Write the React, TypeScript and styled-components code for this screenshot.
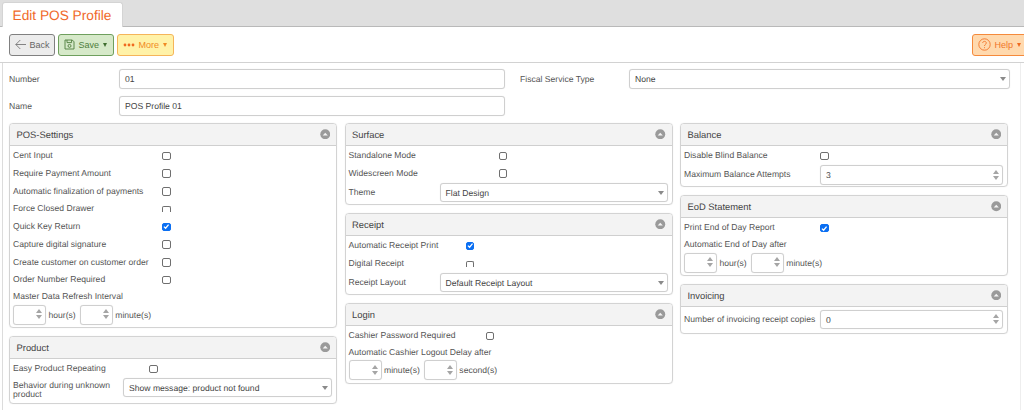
import React from 'react';
import styled, { createGlobalStyle } from 'styled-components';

const GlobalStyle = createGlobalStyle`
  html, body {
    margin: 0;
    padding: 0;
    background: #fff;
    overflow: hidden;
  }
  * {
    box-sizing: border-box;
  }
`;

const Page = styled.div`
  width: 1024px;
  height: 410px;
  overflow: hidden;
  font-family: 'Liberation Sans', Arial, sans-serif;
  font-size: 8.6px;
  text-rendering: geometricPrecision;
  color: #555;
`;

const TabBar = styled.div`
  height: 27px;
  background: #dfdfdf;
  border-bottom: 1px solid #b9b9b9;
  padding: 2px 0 0 2px;
`;

const Tab = styled.div`
  width: 121px;
  height: 25px;
  background: #fff;
  border: 1px solid #d4d4d4;
  border-bottom: none;
  border-radius: 3px 3px 0 0;
  padding: 4px 0 0 9.5px;
  font-size: 13.7px;
  line-height: 18px;
  white-space: nowrap;
  color: #f0692a;
`;

const Toolbar = styled.div`
  height: 36px;
  display: flex;
  align-items: flex-start;
  gap: 3px;
  padding: 7px 0 0 9px;
  border-bottom: 1px solid #d2d2d2;
  overflow: hidden;
`;

const ToolButton = styled.button<{ $w: number; $bg: string; $line: string; $fg: string; $bleed?: boolean }>`
  flex: none;
  width: ${p => p.$w}px;
  height: 21.5px;
  margin-right: ${p => (p.$bleed ? -4 : 0)}px;
  display: flex;
  align-items: center;
  gap: 4px;
  padding: 0 0 0 4.5px;
  background: ${p => p.$bg};
  border: 1px solid ${p => p.$line};
  border-radius: 3px;
  color: ${p => p.$fg};
  font-family: inherit;
  font-size: 9px;
  white-space: nowrap;
`;

const Spacer = styled.div`
  flex: 1;
`;

const Caret = styled.span<{ $fg: string }>`
  width: 0;
  height: 0;
  border-left: 2.5px solid transparent;
  border-right: 2.5px solid transparent;
  border-top: 4px solid ${p => p.$fg};
`;

const Content = styled.div`
  height: 348px;
  margin: 0 3px 0 2px;
  padding: 6px 0 0 6px;
  border-left: 1px solid #dcdcdc;
  border-right: 1px solid #eeeeee;
`;

const TopForm = styled.div`
  display: grid;
  grid-template-columns: 110px 386px 124px 381px;
  grid-auto-rows: 20px;
  row-gap: 7px;
  align-items: center;
`;

const TopLabel = styled.div<{ $indent?: number }>`
  padding-left: ${p => p.$indent ?? 0}px;
  margin-top: -1px;
`;

const Field = styled.div`
  position: relative;
  display: flex;
  align-items: center;
  height: 19.5px;
  padding-left: 5px;
  background: #fff;
  border: 1px solid #cfcfcf;
  border-radius: 3px;
  box-shadow: 0 0 1px rgba(0, 0, 0, 0.12);
  color: #444;
`;

const SelectArrow = styled.span`
  position: absolute;
  right: 3px;
  top: 7px;
  width: 0;
  height: 0;
  border-left: 3.5px solid transparent;
  border-right: 3.5px solid transparent;
  border-top: 4px solid #8a8a8a;
`;

const Spin = styled.span`
  position: absolute;
  right: 3px;
  top: 3.5px;
  display: flex;
  flex-direction: column;
  gap: 2px;
`;

const SpinUp = styled.span`
  width: 0;
  height: 0;
  border-left: 3px solid transparent;
  border-right: 3px solid transparent;
  border-bottom: 4px solid #a5a5a5;
`;

const SpinDown = styled.span`
  width: 0;
  height: 0;
  border-left: 3px solid transparent;
  border-right: 3px solid transparent;
  border-top: 4px solid #a5a5a5;
`;

const Columns = styled.div`
  display: grid;
  grid-template-columns: repeat(3, 328px);
  column-gap: 7.5px;
  margin-top: 6.5px;
  align-items: start;
`;

const Stack = styled.div`
  display: flex;
  flex-direction: column;
  gap: 7.5px;
`;

const PanelBox = styled.section`
  border: 1px solid #d3d3d3;
  border-radius: 4px;
  box-shadow: 0 0 1px rgba(0, 0, 0, 0.15);
  overflow: hidden;
`;

const PanelHead = styled.header`
  height: 22px;
  display: flex;
  align-items: center;
  justify-content: space-between;
  padding: 0 6px 0 6.5px;
  background: #f3f3f3;
  border-bottom: 1px solid #cfcfcf;
  font-size: 9.4px;
  color: #444;
`;

const PanelBody = styled.div`
  padding: 1.5px 4px 1.5px 3px;
`;

const Row = styled.div<{ $label: number; $h?: number; $top?: boolean }>`
  display: grid;
  grid-template-columns: ${p => p.$label}px 1fr;
  align-items: ${p => (p.$top ? 'start' : 'center')};
  height: ${p => p.$h ?? 17.75}px;
`;

const StackedLabel = styled.div`
  height: 14.5px;
  line-height: 14.5px;
  white-space: nowrap;
`;

const SpinnerRow = styled.div`
  display: flex;
  align-items: center;
  gap: 2.5px;
  height: 22px;
`;

const SpinnerField = styled(Field)`
  width: 33px;
  height: 20px;
`;

const SpinnerUnit = styled.span`
  margin-right: 1.5px;
`;

const Box = styled.span<{ $on?: boolean; $clip?: boolean }>`
  display: flex;
  align-items: center;
  justify-content: center;
  width: 8.5px;
  height: ${p => (p.$clip ? 6 : 8.5)}px;
  background: ${p => (p.$on ? '#0b6ff2' : '#fff')};
  border: 1px solid ${p => (p.$on ? '#0b6ff2' : '#6f6f6f')};
  border-bottom: ${p => (p.$clip ? 'none' : undefined)};
  border-radius: ${p => (p.$clip ? '2px 2px 0 0' : '2px')};
`;

const RowLabel = styled.span<{ $nowrap?: boolean; $top?: boolean }>`
  line-height: 9.7px;
  padding-top: ${p => (p.$top ? 3 : 0)}px;
  white-space: ${p => (p.$nowrap ? 'nowrap' : 'normal')};
`;

const CollapseIcon = () => (
  <svg width="10.5" height="10.5" viewBox="0 0 11 11">
    <circle cx="5.5" cy="5.5" r="5.2" fill="#9a9a9a" />
    <path d="M2.8 6.8 L5.5 3.8 L8.2 6.8 Z" fill="#f3f3f3" />
  </svg>
);

const Panel = ({ title, children }: { title: string; children: React.ReactNode }) => (
  <PanelBox>
    <PanelHead>
      {title}
      <CollapseIcon />
    </PanelHead>
    <PanelBody>{children}</PanelBody>
  </PanelBox>
);

const CheckRow = ({ label, width, on, clip }: { label: string; width: number; on?: boolean; clip?: boolean }) => (
  <Row $label={width}>
    <RowLabel $nowrap>{label}</RowLabel>
    <Box $on={on} $clip={clip}>
      {on && (
        <svg width="7" height="7" viewBox="0 0 7 7">
          <path d="M1 3.6 L2.8 5.4 L6 1.4" fill="none" stroke="#fff" strokeWidth="1.4" />
        </svg>
      )}
    </Box>
  </Row>
);

const SelectField = ({ value }: { value: string }) => (
  <Field>
    {value}
    <SelectArrow />
  </Field>
);

const SpinField = ({ value }: { value?: string }) => (
  <Field>
    {value}
    <Spin>
      <SpinUp />
      <SpinDown />
    </Spin>
  </Field>
);

const FieldRow = ({
  label,
  width,
  h,
  top,
  nowrap,
  children,
}: {
  label: React.ReactNode;
  width: number;
  h: number;
  top?: boolean;
  nowrap?: boolean;
  children: React.ReactNode;
}) => (
  <Row $label={width} $h={h} $top={top}>
    <RowLabel $top={top} $nowrap={nowrap}>
      {label}
    </RowLabel>
    {children}
  </Row>
);

const Spinners = ({ label, units }: { label: string; units: [string, string] }) => (
  <>
    <StackedLabel>{label}</StackedLabel>
    <SpinnerRow>
      {units.map(u => (
        <React.Fragment key={u}>
          <SpinnerField>
            <Spin>
              <SpinUp />
              <SpinDown />
            </Spin>
          </SpinnerField>
          <SpinnerUnit>{u}</SpinnerUnit>
        </React.Fragment>
      ))}
    </SpinnerRow>
  </>
);

const App = () => {
  return (
    <Page>
      <GlobalStyle />
      <TabBar>
        <Tab>Edit POS Profile</Tab>
      </TabBar>
      <Toolbar>
        <ToolButton $w={46} $bg="#ececec" $line="#808080" $fg="#666">
          <svg width="11" height="11" viewBox="0 0 11 11" fill="none" stroke="#777" strokeWidth="0.9">
            <path d="M0.8 5.5 H11 M5.3 1 L0.8 5.5 L5.3 10" />
          </svg>
          Back
        </ToolButton>
        <ToolButton $w={56} $bg="#d6e9c9" $line="#6f9f5e" $fg="#4f7d3c">
          <svg width="11" height="11" viewBox="0 0 11 11" fill="none" stroke="#4f7d3c" strokeWidth="0.9">
            <path d="M1 1 H8.3 L10 2.8 V10 H1 Z M3 1 V3.6 H7.6 V1" />
            <circle cx="5.5" cy="6.9" r="1.5" />
          </svg>
          Save
          <Caret $fg="#3f6d2f" />
        </ToolButton>
        <ToolButton $w={57} $bg="#fff2a8" $line="#f5b55a" $fg="#f08a24">
          <svg width="12" height="4" viewBox="0 0 12 4" fill="#f0691f">
            <circle cx="2" cy="2" r="1.4" />
            <circle cx="6" cy="2" r="1.4" />
            <circle cx="10" cy="2" r="1.4" />
          </svg>
          More
          <Caret $fg="#f08a24" />
        </ToolButton>
        <Spacer />
        <ToolButton $w={56} $bg="#ffd9ae" $line="#f58a3c" $fg="#f0752a" $bleed>
          <svg width="13" height="13" viewBox="0 0 13 13" fill="none" stroke="#f0752a" strokeWidth="0.9">
            <circle cx="6.5" cy="6.5" r="5.7" />
            <path d="M4.7 5 C4.7 2.8 8.3 2.8 8.3 5 C8.3 6.5 6.5 6.3 6.5 8" />
            <path d="M6.5 9.2 V10.2" />
          </svg>
          Help
          <Caret $fg="#f0691f" />
        </ToolButton>
      </Toolbar>
      <Content>
        <TopForm>
          <TopLabel>Number</TopLabel>
          <Field>01</Field>
          <TopLabel $indent={15}>Fiscal Service Type</TopLabel>
          <SelectField value="None" />
          <TopLabel>Name</TopLabel>
          <Field>POS Profile 01</Field>
        </TopForm>
        <Columns>
          <Stack>
            <Panel title="POS-Settings">
              <CheckRow label="Cent Input" width={149} />
              <CheckRow label="Require Payment Amount" width={149} />
              <CheckRow label="Automatic finalization of payments" width={149} />
              <CheckRow label="Force Closed Drawer" width={149} clip />
              <CheckRow label="Quick Key Return" width={149} on />
              <CheckRow label="Capture digital signature" width={149} />
              <CheckRow label="Create customer on customer order" width={149} />
              <CheckRow label="Order Number Required" width={149} />
              <Spinners label="Master Data Refresh Interval" units={['hour(s)', 'minute(s)']} />
            </Panel>
            <Panel title="Product">
              <CheckRow label="Easy Product Repeating" width={136} />
              <FieldRow label="Behavior during unknown product" width={110} h={23.5} top>
                <SelectField value="Show message: product not found" />
              </FieldRow>
            </Panel>
          </Stack>
          <Stack>
            <Panel title="Surface">
              <CheckRow label="Standalone Mode" width={150} />
              <CheckRow label="Widescreen Mode" width={150} />
              <FieldRow label="Theme" width={91} h={20}>
                <SelectField value="Flat Design" />
              </FieldRow>
            </Panel>
            <Panel title="Receipt">
              <CheckRow label="Automatic Receipt Print" width={117} on />
              <CheckRow label="Digital Receipt" width={117} clip />
              <FieldRow label="Receipt Layout" width={91} h={20}>
                <SelectField value="Default Receipt Layout" />
              </FieldRow>
            </Panel>
            <Panel title="Login">
              <CheckRow label="Cashier Password Required" width={137} />
              <Spinners label="Automatic Cashier Logout Delay after" units={['minute(s)', 'second(s)']} />
            </Panel>
          </Stack>
          <Stack>
            <Panel title="Balance">
              <CheckRow label="Disable Blind Balance" width={136} />
              <FieldRow label="Maximum Balance Attempts" width={136} h={20}>
                <SpinField value="3" />
              </FieldRow>
            </Panel>
            <Panel title="EoD Statement">
              <CheckRow label="Print End of Day Report" width={136} on />
              <Spinners label="Automatic End of Day after" units={['hour(s)', 'minute(s)']} />
            </Panel>
            <Panel title="Invoicing">
              <FieldRow label="Number of invoicing receipt copies" width={136} h={23} nowrap>
                <SpinField value="0" />
              </FieldRow>
            </Panel>
          </Stack>
        </Columns>
      </Content>
    </Page>
  );
};

export default App;
